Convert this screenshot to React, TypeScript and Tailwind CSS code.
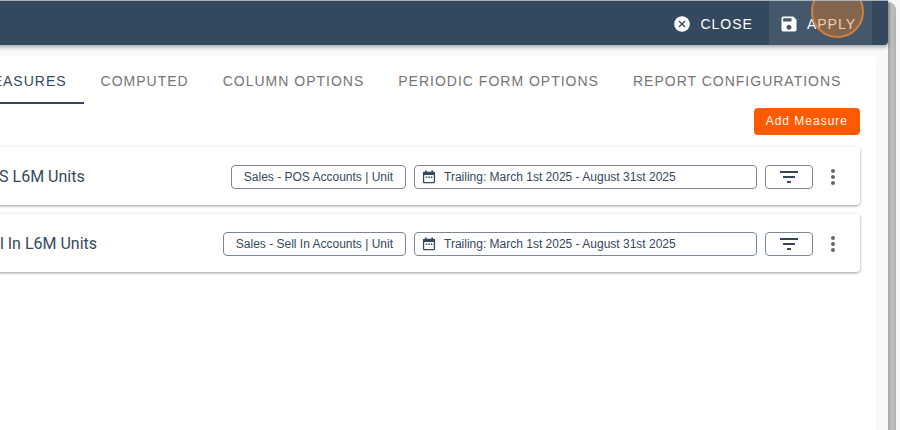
import { useState } from "react";
import { MdFilterList, MdMoreVert, MdSave } from "react-icons/md";

const tabs = [
  "MEASURES",
  "COMPUTED",
  "COLUMN OPTIONS",
  "PERIODIC FORM OPTIONS",
  "REPORT CONFIGURATIONS",
];

const measures = [
  {
    name: "POS L6M Units",
    source: "Sales - POS Accounts | Unit",
    period: "Trailing: March 1st 2025 - August 31st 2025",
  },
  {
    name: "Sell In L6M Units",
    source: "Sales - Sell In Accounts | Unit",
    period: "Trailing: March 1st 2025 - August 31st 2025",
  },
];

type Measure = (typeof measures)[number];

const CloseIcon = () => (
  <svg viewBox="0 0 16 16" className="size-4" aria-hidden="true">
    <circle cx="8" cy="8" r="7.8" fill="currentColor" />
    <path d="M5 5l6 6M11 5l-6 6" stroke="#34495e" strokeWidth="1.4" fill="none" />
  </svg>
);

const CalendarIcon = () => (
  <svg viewBox="0 0 14 14" className="size-3.5" aria-hidden="true">
    <path
      d="M3 0.4h1.6v1.3h4.8V0.4H11v1.3h0.9c0.7 0 1.2 0.5 1.2 1.2v9.2c0 0.7-0.5 1.2-1.2 1.2H2.1c-0.7 0-1.2-0.5-1.2-1.2V2.9c0-0.7 0.5-1.2 1.2-1.2H3zM2.2 5v7.1h9.6V5z"
      fill="currentColor"
      fillRule="evenodd"
    />
    <path d="M3.7 6.4h1.5v1.5H3.7zM6.3 6.4h1.5v1.5H6.3zM8.9 6.4h1.5v1.5H8.9z" fill="currentColor" />
  </svg>
);

const MeasureRow = ({ measure }: { measure: Measure }) => (
  <li className="flex items-center gap-2 rounded bg-white pb-4 pl-4 pr-[15px] pt-[18px] shadow-[0_1px_3px_rgba(0,0,0,0.4)]">
    <h2 className="flex-1 whitespace-nowrap font-[Roboto,sans-serif] text-base leading-6 text-[#34495e]">
      {measure.name}
    </h2>
    <button
      type="button"
      className="h-6 whitespace-nowrap rounded border border-[#7b8794] px-3 text-xs text-[#34495e]"
    >
      {measure.source}
    </button>
    <button
      type="button"
      className="flex h-6 w-[343px] items-center gap-2 whitespace-nowrap rounded border border-[#7b8794] px-[7px] text-xs text-[#34495e]"
    >
      <CalendarIcon />
      {measure.period}
    </button>
    <button
      type="button"
      aria-label="Filter"
      className="flex h-6 w-12 items-center justify-center rounded border border-[#7b8794] text-[#34495e]"
    >
      <MdFilterList className="size-6" />
    </button>
    <button type="button" aria-label="More options" className="text-[#666666]">
      <MdMoreVert className="size-6" />
    </button>
  </li>
);

const App = () => {
  const [activeTab, setActiveTab] = useState("MEASURES");

  return (
    <div className="flex min-h-screen overflow-hidden bg-[#f7f7f7] font-['Liberation_Sans',Arial,sans-serif]">
      <div className="-ml-[38px] flex min-w-0 flex-1 flex-col bg-[#f6f8fa]">
        <header className="relative flex h-[45px] justify-end overflow-hidden rounded-br border-t border-[#a9b3b8] bg-[#34495e] pr-4 text-sm tracking-[1px] text-white shadow-[0_2px_4px_rgba(0,0,0,0.35)]">
          <button type="button" className="flex items-center gap-2.5 px-4 pt-0.5">
            <CloseIcon />
            CLOSE
          </button>
          <button type="button" className="flex items-center gap-2 bg-[#44576b] pl-2.5 pr-4 pt-0.5">
            <MdSave className="size-5" />
            APPLY
          </button>
          <span className="pointer-events-none absolute -top-4 right-6 size-[53px] rounded-full border-2 border-[#d0803f] bg-[#e67e22]/40" />
        </header>

        <main className="mr-3 mt-[11px] flex-1 rounded-tr bg-white pr-4">
          <nav role="tablist" className="flex pl-px">
            {tabs.map((tab) => (
              <button
                key={tab}
                type="button"
                role="tab"
                aria-selected={tab === activeTab}
                onClick={() => setActiveTab(tab)}
                className={`h-12 whitespace-nowrap border-b-2 px-[17px] pt-[3px] text-sm tracking-[1px] ${
                  tab === activeTab
                    ? "border-[#34495e] text-[#34495e]"
                    : "border-transparent text-[#757575]"
                }`}
              >
                {tab}
              </button>
            ))}
          </nav>

          <div className="mt-1 flex justify-end">
            <button
              type="button"
              className="h-[27px] rounded bg-[#ff5a00] px-3 pb-0.5 text-xs font-medium tracking-[1px] text-white"
            >
              Add Measure
            </button>
          </div>

          <ul className="mt-3 flex flex-col gap-[9px]">
            {measures.map((measure) => (
              <MeasureRow key={measure.name} measure={measure} />
            ))}
          </ul>
        </main>
      </div>
      <div className="mr-1 mt-0.5 w-2 rounded-tr-lg bg-linear-to-r from-[#a6a6a6] via-[#c0c0c0] to-[#b0b0b0]" />
    </div>
  );
};

export default App;
